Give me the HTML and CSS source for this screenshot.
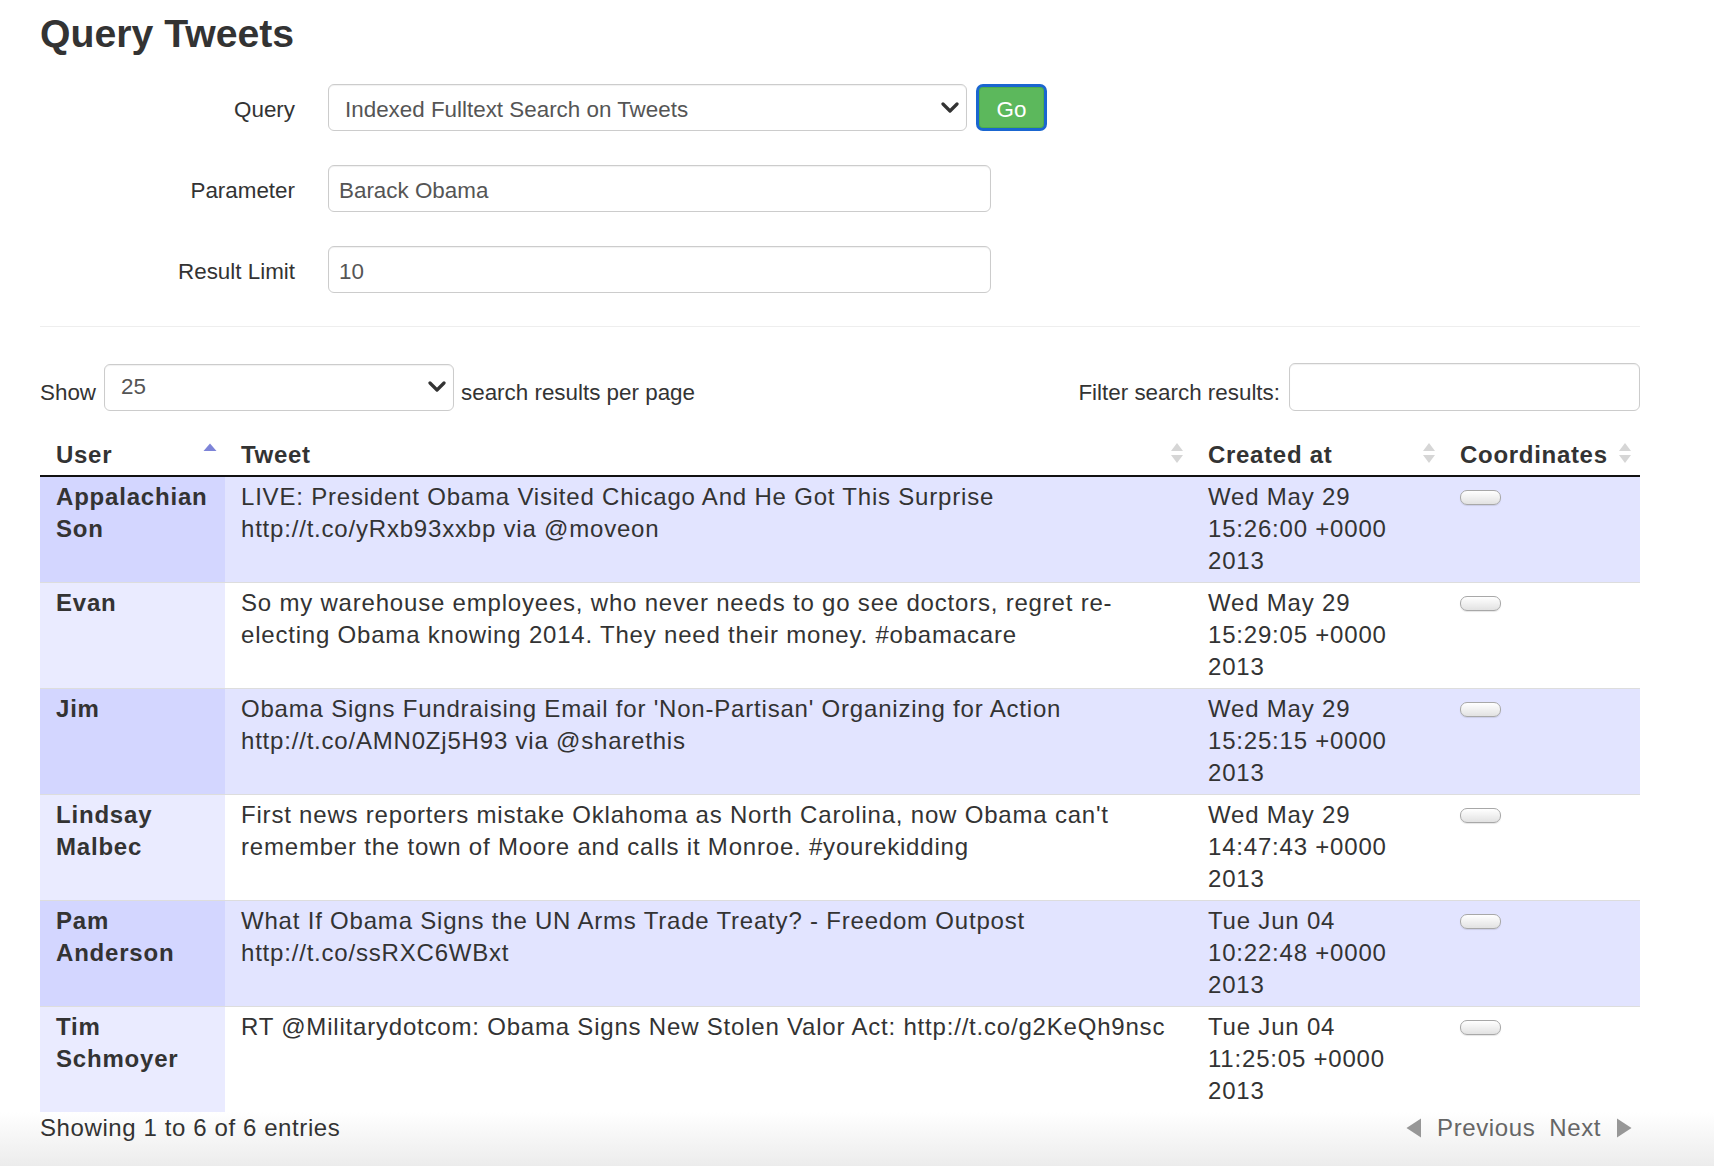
FILE: index.html
```html
<!DOCTYPE html>
<html lang="en">
<head>
<meta charset="utf-8">
<title>Query Tweets</title>
<link rel="stylesheet" href="styles.css">
</head>
<body>
<div class="page">
  <h1 class="title">Query Tweets</h1>

  <form class="query-form">
    <div class="form-row">
      <label class="form-label">Query</label>
      <div class="select query-select">
        <span class="select-text">Indexed Fulltext Search on Tweets</span>
        <svg class="chevron" width="18" height="12" viewBox="0 0 18 12"><path d="M2 2 L9 9 L16 2" fill="none" stroke="#333" stroke-width="3.2" stroke-linecap="round" stroke-linejoin="round"/></svg>
      </div>
      <button type="button" class="go-btn">Go</button>
    </div>
    <div class="form-row">
      <label class="form-label">Parameter</label>
      <input class="text-input" type="text" value="Barack Obama">
    </div>
    <div class="form-row">
      <label class="form-label">Result Limit</label>
      <input class="text-input" type="text" value="10">
    </div>
  </form>

  <hr class="divider">

  <div class="dt-controls">
    <div class="dt-length">
      <span class="ctl-text">Show</span>
      <div class="select len-select">
        <span class="select-text">25</span>
        <svg class="chevron" width="18" height="12" viewBox="0 0 18 12"><path d="M2 2 L9 9 L16 2" fill="none" stroke="#333" stroke-width="3.2" stroke-linecap="round" stroke-linejoin="round"/></svg>
      </div>
      <span class="ctl-text">search results per page</span>
    </div>
    <div class="dt-filter">
      <span class="ctl-text">Filter search results:</span>
      <input class="filter-input" type="text" value="">
    </div>
  </div>

  <table class="dt">
    <colgroup>
      <col class="c-user"><col class="c-tweet"><col class="c-created"><col class="c-coords">
    </colgroup>
    <thead>
      <tr>
        <th><div class="th-inner"><span>User</span><svg class="sort" width="14" height="22" viewBox="0 0 14 22"><path d="M7 1.5 L13.5 9 L0.5 9 Z" fill="#7d84d8"/></svg></div></th>
        <th><div class="th-inner"><span>Tweet</span><svg class="sort" width="14" height="22" viewBox="0 0 14 22"><path d="M7 1 L13 9 L1 9 Z" fill="#d6d6d6"/><path d="M1 13 L13 13 L7 21 Z" fill="#d6d6d6"/></svg></div></th>
        <th><div class="th-inner"><span>Created at</span><svg class="sort" width="14" height="22" viewBox="0 0 14 22"><path d="M7 1 L13 9 L1 9 Z" fill="#d6d6d6"/><path d="M1 13 L13 13 L7 21 Z" fill="#d6d6d6"/></svg></div></th>
        <th><div class="th-inner"><span>Coordinates</span><svg class="sort" width="14" height="22" viewBox="0 0 14 22"><path d="M7 1 L13 9 L1 9 Z" fill="#d6d6d6"/><path d="M1 13 L13 13 L7 21 Z" fill="#d6d6d6"/></svg></div></th>
      </tr>
    </thead>
    <tbody>
      <tr class="odd">
        <td class="sorted user">Appalachian Son</td>
        <td>LIVE: President Obama Visited Chicago And He Got This Surprise http://t.co/yRxb93xxbp via @moveon</td>
        <td>Wed May 29 15:26:00 +0000 2013</td>
        <td><button type="button" class="coord-btn"></button></td>
      </tr>
      <tr class="even">
        <td class="sorted user">Evan</td>
        <td>So my warehouse employees, who never needs to go see doctors, regret re-electing Obama knowing 2014. They need their money. #obamacare</td>
        <td>Wed May 29 15:29:05 +0000 2013</td>
        <td><button type="button" class="coord-btn"></button></td>
      </tr>
      <tr class="odd">
        <td class="sorted user">Jim</td>
        <td>Obama Signs Fundraising Email for 'Non-Partisan' Organizing for Action http://t.co/AMN0Zj5H93 via @sharethis</td>
        <td>Wed May 29 15:25:15 +0000 2013</td>
        <td><button type="button" class="coord-btn"></button></td>
      </tr>
      <tr class="even">
        <td class="sorted user">Lindsay Malbec</td>
        <td>First news reporters mistake Oklahoma as North Carolina, now Obama can't remember the town of Moore and calls it Monroe. #yourekidding</td>
        <td>Wed May 29 14:47:43 +0000 2013</td>
        <td><button type="button" class="coord-btn"></button></td>
      </tr>
      <tr class="odd">
        <td class="sorted user">Pam Anderson</td>
        <td>What If Obama Signs the UN Arms Trade Treaty? - Freedom Outpost http://t.co/ssRXC6WBxt</td>
        <td>Tue Jun 04 10:22:48 +0000 2013</td>
        <td><button type="button" class="coord-btn"></button></td>
      </tr>
      <tr class="even">
        <td class="sorted user">Tim Schmoyer</td>
        <td>RT @Militarydotcom: Obama Signs New Stolen Valor Act: http://t.co/g2KeQh9nsc</td>
        <td>Tue Jun 04 11:25:05 +0000 2013</td>
        <td><button type="button" class="coord-btn"></button></td>
      </tr>
    </tbody>
  </table>

  <div class="dt-footer">
    <div class="dt-info">Showing 1 to 6 of 6 entries</div>
    <div class="dt-paging">
      <svg class="pg-arrow" width="18" height="22" viewBox="0 0 18 22"><path d="M1.5 11 L16 1.5 L16 20.5 Z" fill="#979797"/></svg>
      <span class="pg-link">Previous</span>
      <span class="pg-link">Next</span>
      <svg class="pg-arrow" width="18" height="22" viewBox="0 0 18 22"><path d="M2 1.5 L16.5 11 L2 20.5 Z" fill="#979797"/></svg>
    </div>
  </div>
</div>
</body>
</html>
```

FILE: styles.css
```css
* { box-sizing: border-box; }

html, body { margin: 0; padding: 0; }

body {
  font-family: "Liberation Sans", Arial, Helvetica, sans-serif;
  font-size: 22.4px;
  line-height: 32px;
  color: #333;
  min-height: 1166px;
  background: linear-gradient(to bottom, #ffffff 0, #ffffff 1112px, #ececec 1166px);
}

.page {
  width: 1600px;
  margin-left: 40px;
  padding-top: 13px;
}

.title {
  margin: 0;
  font-size: 39.2px;
  line-height: 42px;
  font-weight: bold;
  color: #333;
}

/* form */
.query-form {
  margin-top: 29px;
  display: flex;
  flex-direction: column;
  gap: 34px;
}

.form-row {
  display: flex;
  align-items: center;
  height: 47px;
}

.form-label {
  width: 255px;
  margin-right: 33px;
  padding-top: 4px;
  text-align: right;
  font-weight: normal;
  color: #333;
}

.select {
  display: flex;
  align-items: center;
  justify-content: space-between;
  height: 47px;
  border: 1px solid #ccc;
  border-radius: 6px;
  background: #fff;
  color: #555;
  box-shadow: inset 0 1px 1px rgba(0,0,0,0.06);
}

.select-text { padding-top: 5px; }

.query-select {
  width: 639px;
  padding: 0 7px 0 16px;
}

.chevron { flex: none; }

.go-btn {
  margin-left: 9px;
  width: 71px;
  height: 47px;
  padding: 4px 0 0;
  font-family: inherit;
  font-size: 22.4px;
  color: #fff;
  background: #5cb85c;
  border: 3px solid #1a66d0;
  border-radius: 7px;
  box-shadow: inset 0 0 0 1px #4cae4c;
}

.text-input {
  width: 663px;
  height: 47px;
  padding: 5px 10px 0;
  font-family: inherit;
  font-size: 22.4px;
  color: #555;
  border: 1px solid #ccc;
  border-radius: 6px;
  background: #fff;
  box-shadow: inset 0 1px 1px rgba(0,0,0,0.06);
  outline: none;
}

.divider {
  margin: 33px 0 36px;
  border: 0;
  border-top: 1px solid #eee;
  height: 0;
}

/* datatable controls */
.dt-controls {
  display: flex;
  justify-content: space-between;
  align-items: center;
  height: 48px;
}

.dt-length, .dt-filter {
  display: flex;
  align-items: center;
  gap: 8px;
}

.ctl-text { padding-top: 12px; }

.len-select {
  width: 350px;
  padding: 0 7px 0 16px;
  margin-right: -1px;
}

.len-select .select-text { padding-top: 0; padding-bottom: 0; }

.filter-input {
  width: 351px;
  height: 48px;
  border: 1px solid #ccc;
  border-radius: 6px;
  box-shadow: inset 0 1px 1px rgba(0,0,0,0.06);
  outline: none;
  margin-left: 1px;
}

/* table */
.dt {
  margin-top: 23px;
  width: 1600px;
  table-layout: fixed;
  border-collapse: collapse;
  font-size: 24px;
  letter-spacing: 0.8px;
  line-height: 32px;
}

.c-user { width: 185px; }
.c-tweet { width: 967px; }
.c-created { width: 252px; }
.c-coords { width: 196px; }

.dt th {
  text-align: left;
  font-weight: bold;
  padding: 5px 8px 4px 16px;
  border-bottom: 2px solid #111;
  letter-spacing: 0.7px;
}

.th-inner {
  display: flex;
  align-items: center;
  justify-content: space-between;
}

.sort { flex: none; margin-top: -4px; }

.dt td {
  vertical-align: top;
  padding: 4px 16px 5px;
}

.dt tbody tr + tr td { border-top: 1px solid #ddd; }

.dt tr.odd td { background: #e2e4ff; }
.dt tr.odd td.sorted { background: #d3d6ff; }
.dt tr.even td { background: #fff; }
.dt tr.even td.sorted { background: #eaebff; }

.dt td.user { font-weight: bold; letter-spacing: 0.8px; }

.coord-btn {
  display: inline-block;
  vertical-align: middle;
  width: 41px;
  height: 15px;
  margin-top: -2px;
  padding: 0;
  border: 1px solid #a8a8a8;
  border-radius: 7px;
  background: linear-gradient(to bottom, #ffffff, #e2e2e2);
  box-shadow: 0 1px 1px rgba(0,0,0,0.1);
}

/* footer */
.dt-footer {
  display: flex;
  justify-content: space-between;
  align-items: center;
  font-size: 24px;
  letter-spacing: 0.6px;
  line-height: 32px;
}

.dt-paging {
  display: flex;
  align-items: center;
  gap: 14px;
  margin-right: 7px;
  color: #666;
}

.pg-arrow { filter: blur(0.7px); }
```
